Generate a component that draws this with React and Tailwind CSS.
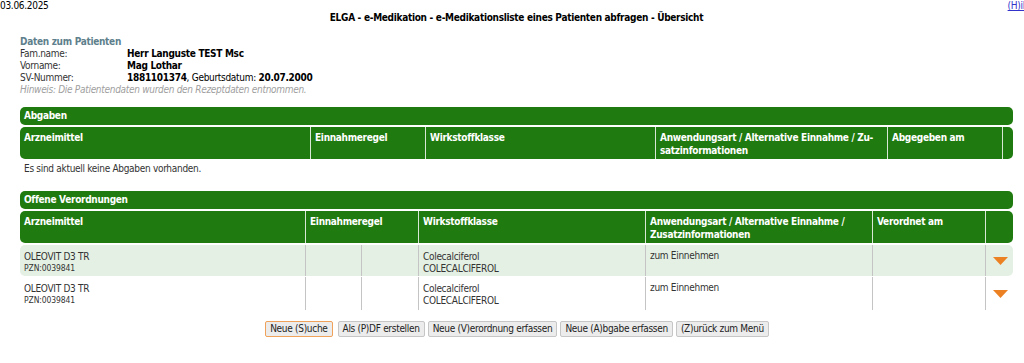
import React from "react";

const G = "bg-[#1f7b0f]";

function Tri() {
  return (
    <svg width="15" height="8" viewBox="0 0 15 8" className="block">
      <polygon points="0,0 15,0 7.5,8" fill="#ec8123" />
    </svg>
  );
}

export default function App() {
  return (
    <div className="w-[1024px] h-[363px] overflow-hidden bg-white font-['DejaVu_Sans_Condensed','DejaVu_Sans',sans-serif] text-[10px] leading-[12px] tracking-[-0.3px] text-[#333]">
      <div className="w-[1033px]">
        <div className="flex justify-between h-[12px]">
          <span className="text-black">03.06.2025</span>
          <a href="#" className="text-[#3333cc] underline">(H)ilfe</a>
        </div>
        <div className="text-center font-bold text-black h-[12px]">
          ELGA - e-Medikation - e-Medikationsliste eines Patienten abfragen - Übersicht
        </div>

        <div className="px-[20px]">
          <div className="pt-[12px] grid grid-cols-[107px_1fr]">
            <div className="col-span-2 font-bold text-[#5e7f8c]">Daten zum Patienten</div>
            <div>Fam.name:</div>
            <div className="font-bold text-black">Herr Languste TEST Msc</div>
            <div>Vorname:</div>
            <div className="font-bold text-black">Mag Lothar</div>
            <div>SV-Nummer:</div>
            <div className="text-black">
              <b>1881101374</b>, Geburtsdatum: <b>20.07.2000</b>
            </div>
            <div className="col-span-2 italic text-[#a0a0a0]">
              Hinweis: Die Patientendaten wurden den Rezeptdaten entnommen.
            </div>
          </div>

          {/* Abgaben */}
          <div className="mt-[11px]">
            <div className={`${G} h-[18px] rounded-[5px] text-white font-bold leading-[18px] pl-[4px]`}>Abgaben</div>
            <div className={`mt-[2px] h-[32px] grid grid-cols-[290px_115px_230px_232px_115px_11px] text-white font-bold leading-[13px]`}>
              <div className={`${G} rounded-l-[5px] pl-[4px] pt-[4px]`}>Arzneimittel</div>
              <div className={`${G} border-l border-[#d9e8d6] pl-[4px] pt-[4px]`}>Einnahmeregel</div>
              <div className={`${G} border-l border-[#d9e8d6] pl-[4px] pt-[4px]`}>Wirkstoffklasse</div>
              <div className={`${G} border-l border-[#d9e8d6] pl-[4px] pt-[4px] whitespace-nowrap overflow-hidden`}>
                Anwendungsart / Alternative Einnahme / Zu-
                <br />
                satzinformationen
              </div>
              <div className={`${G} border-l border-[#d9e8d6] pl-[4px] pt-[4px]`}>Abgegeben am</div>
              <div className={`${G} border-l border-[#d9e8d6] rounded-r-[5px]`}></div>
            </div>
            <div className="pl-[4px] pt-[4px] text-[#333]">Es sind aktuell keine Abgaben vorhanden.</div>
          </div>

          {/* Offene Verordnungen */}
          <div className="mt-[16px]">
            <div className={`${G} h-[18px] rounded-[5px] text-white font-bold leading-[18px] pl-[4px]`}>Offene Verordnungen</div>
            <div className={`mt-[2px] h-[32px] grid grid-cols-[285px_113px_227px_227px_113px_28px] text-white font-bold leading-[13px]`}>
              <div className={`${G} rounded-l-[5px] pl-[4px] pt-[4px]`}>Arzneimittel</div>
              <div className={`${G} border-l border-[#d9e8d6] pl-[4px] pt-[4px]`}>Einnahmeregel</div>
              <div className={`${G} border-l border-[#d9e8d6] pl-[4px] pt-[4px]`}>Wirkstoffklasse</div>
              <div className={`${G} border-l border-[#d9e8d6] pl-[4px] pt-[4px] whitespace-nowrap overflow-hidden`}>
                Anwendungsart / Alternative Einnahme /
                <br />
                Zusatzinformationen
              </div>
              <div className={`${G} border-l border-[#d9e8d6] pl-[4px] pt-[4px]`}>Verordnet am</div>
              <div className={`${G} border-l border-[#d9e8d6] rounded-r-[5px]`}></div>
            </div>

            {[0, 1].map((i) => (
              <div
                key={i}
                className={`grid grid-cols-[285px_56px_57px_227px_227px_113px_28px] ${
                  i === 0 ? "mt-[2px] h-[31px] bg-[#e4f0e3] rounded-[5px]" : "mt-[1px] h-[33px]"
                }`}
              >
                <div className="pl-[4px] pt-[6px]">
                  <div>OLEOVIT D3 TR</div>
                  <div className="text-[8.5px] leading-[11px] tracking-[-0.1px]">PZN:0039841</div>
                </div>
                <div className="border-l border-[#c4c4c4]"></div>
                <div className="border-l border-[#c4c4c4]"></div>
                <div className="border-l border-[#c4c4c4] pl-[4px] pt-[6px]">
                  <div>Colecalciferol</div>
                  <div className="leading-[11px]">COLECALCIFEROL</div>
                </div>
                <div className="border-l border-[#c4c4c4] pl-[4px] pt-[5px]">zum Einnehmen</div>
                <div className="border-l border-[#c4c4c4]"></div>
                <div className="border-l border-[#c4c4c4] flex items-center justify-center pl-[1px] pt-[1px]">
                  <Tri />
                </div>
              </div>
            ))}
          </div>

          <div className="mt-[11px] flex justify-center gap-[3px] pl-[1px]">
            <button className="h-[16px] px-[4px] leading-[14px] bg-[#ececec] border border-[#f0a25a] rounded-[2px] text-[#222] mr-[2px]">Neue (S)uche</button>
            <button className="h-[16px] px-[4px] leading-[14px] bg-[#ececec] border border-[#c6c6c6] rounded-[2px] text-[#222]">Als (P)DF erstellen</button>
            <button className="h-[16px] px-[4px] leading-[14px] bg-[#ececec] border border-[#c6c6c6] rounded-[2px] text-[#222]">Neue (V)erordnung erfassen</button>
            <button className="h-[16px] px-[4px] leading-[14px] bg-[#ececec] border border-[#c6c6c6] rounded-[2px] text-[#222]">Neue (A)bgabe erfassen</button>
            <button className="h-[16px] px-[4px] leading-[14px] bg-[#ececec] border border-[#c6c6c6] rounded-[2px] text-[#222]">(Z)urück zum Menü</button>
          </div>
        </div>
      </div>
    </div>
  );
}
